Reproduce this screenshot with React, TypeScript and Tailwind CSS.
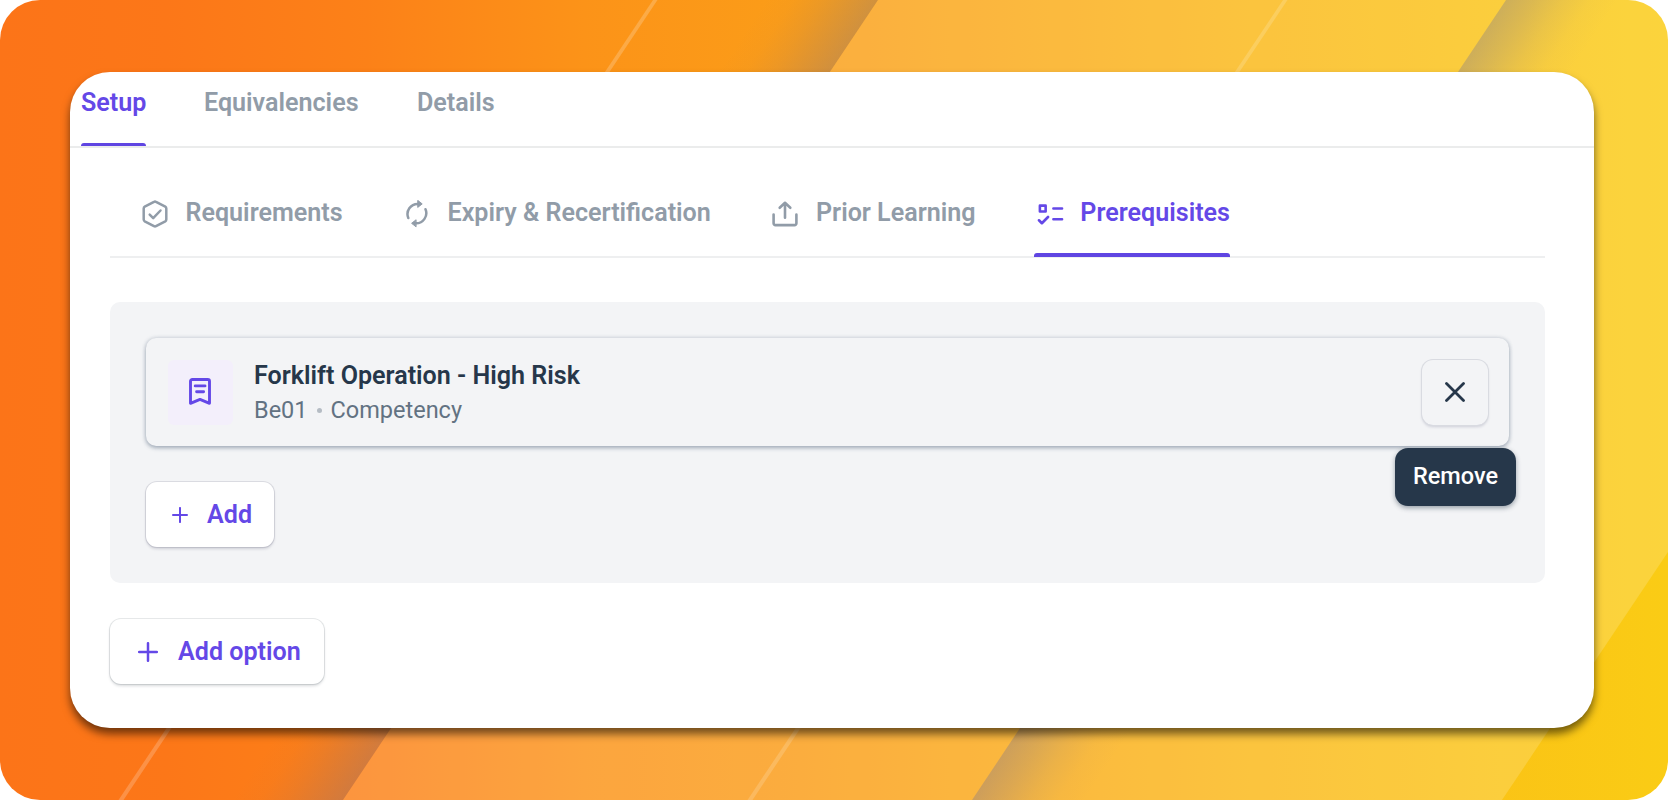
import React from "react";

function Backdrop() {
  return (
    <svg className="absolute inset-0 h-full w-full" viewBox="0 0 1668 800" preserveAspectRatio="none">
      <defs>
        <linearGradient id="base" x1="0" x2="1668" y1="0" y2="0" gradientUnits="userSpaceOnUse">
          <stop offset="0" stopColor="#fc7418" />
          <stop offset="0.1" stopColor="#fc7718" />
          <stop offset="0.22" stopColor="#fc8118" />
          <stop offset="0.35" stopColor="#fc9318" />
          <stop offset="0.48" stopColor="#fb9d18" />
          <stop offset="0.75" stopColor="#fbb817" />
          <stop offset="1" stopColor="#facc15" />
        </linearGradient>
        <linearGradient id="shadeLeft" x1="800" x2="878" y1="-52" y2="0" gradientUnits="userSpaceOnUse">
          <stop offset="0" stopColor="#6c6c98" stopOpacity="0" />
          <stop offset="0.25" stopColor="#6c6c98" stopOpacity="0.025" />
          <stop offset="0.5" stopColor="#6c6c98" stopOpacity="0.1" />
          <stop offset="0.75" stopColor="#6c6c98" stopOpacity="0.2" />
          <stop offset="1" stopColor="#6c6c98" stopOpacity="0.3" />
        </linearGradient>
        <linearGradient id="shadeRight" x1="1506" x2="1584" y1="0" y2="52" gradientUnits="userSpaceOnUse">
          <stop offset="0" stopColor="#6c6c98" stopOpacity="0.32" />
          <stop offset="0.25" stopColor="#6c6c98" stopOpacity="0.22" />
          <stop offset="0.5" stopColor="#6c6c98" stopOpacity="0.11" />
          <stop offset="0.75" stopColor="#6c6c98" stopOpacity="0.03" />
          <stop offset="1" stopColor="#6c6c98" stopOpacity="0" />
        </linearGradient>
      </defs>
      <rect width="1668" height="800" fill="url(#base)" />
      <path d="M700 0H878L343 800H165Z" fill="url(#shadeLeft)" />
      <path d="M878 0H1668V552L1502 800H343Z" fill="#fff" fillOpacity="0.17" />
      <path d="M1506 0H1668V60L1172 800H972Z" fill="url(#shadeRight)" />
      <path d="M653 0H657.5L123.500 800H118.500Z" fill="#fff" fillOpacity="0.2" />
      <path d="M1283 0H1287.500L752.500 800H747.500Z" fill="#fff" fillOpacity="0.17" />
    </svg>
  );
}

type IconProps = { className?: string };

const stroke = {
  fill: "none",
  stroke: "currentColor",
  strokeLinecap: "round" as const,
  strokeLinejoin: "round" as const,
};

function HexCheckIcon({ className }: IconProps) {
  return (
    <svg className={className} viewBox="0 0 28 28" {...stroke} strokeWidth="2.5">
      <path d="M13 1.800a2 2 0 0 1 2 0L24.300 6.700a2 2 0 0 1 1 1.700V19.600a2 2 0 0 1-1 1.700L15 26.200a2 2 0 0 1-2 0L3.700 21.300a2 2 0 0 1-1-1.700V8.400a2 2 0 0 1 1-1.700Z" />
      <path d="M8.700 14.600l3.500 3.500 7.300-7.600" />
    </svg>
  );
}

function CycleIcon({ className }: IconProps) {
  return (
    <svg className={className} viewBox="0 0 24 28" {...stroke} strokeWidth="2.5">
      <path d="M3.300 18A10.200 10.200 0 0 1 13 3.900" />
      <path d="M20.500 9.200A10.200 10.200 0 0 1 10.800 23.300" />
      <path d="M13 .6L17.200 3.900L13 7.200Z" fill="currentColor" strokeWidth="1" />
      <path d="M10.800 20L6.600 23.300L10.800 26.600Z" fill="currentColor" strokeWidth="1" />
    </svg>
  );
}

function UploadIcon({ className }: IconProps) {
  return (
    <svg className={className} viewBox="0 0 26 28" {...stroke} strokeWidth="2.6">
      <path d="M1.600 14.500V23.300a1.800 1.800 0 0 0 1.800 1.800H22.600a1.800 1.800 0 0 0 1.800-1.800V14.500" />
      <path d="M13 17.800V2.800M7.700 7.800l5.300-5 5.300 5" />
    </svg>
  );
}

function ChecklistIcon({ className }: IconProps) {
  return (
    <svg className={className} viewBox="0 0 27 22" {...stroke} strokeWidth="2.600">
      <path d="M2.900 2.600H8.700V8.500H2.900ZM16.500 5.500h8.700M16.500 16.300h8.700M2 17.300l2.900 3 6.200-6.300" />
    </svg>
  );
}

function BookmarkIcon({ className }: IconProps) {
  return (
    <svg className={className} viewBox="0 0 22 27" {...stroke} strokeWidth="2.900">
      <path d="M1.500 25.300V3.300a1.800 1.800 0 0 1 1.800-1.800H18.700a1.800 1.800 0 0 1 1.800 1.800V25.300L11 21.400Z" />
      <path d="M6.200 7.900h9.800M7.600 13.800h7" />
    </svg>
  );
}

function PlusIcon({ className }: IconProps) {
  return (
    <svg className={className} viewBox="0 0 20 20" {...stroke} strokeWidth="2.500">
      <path d="M10 1.200v17.600M1.200 10h17.600" />
    </svg>
  );
}

function CloseIcon({ className }: IconProps) {
  return (
    <svg className={className} viewBox="0 0 20 20" {...stroke} strokeWidth="2.800">
      <path d="M1.500 1.500l17 17M18.500 1.500l-17 17" />
    </svg>
  );
}

export default function App() {
  return (
    <div className="relative flex h-[800px] w-[1668px] overflow-hidden rounded-[40px] px-[70px] py-[72px] font-['Roboto',sans-serif] text-[25.100px] font-[570] text-[#919ca8]">
      <Backdrop />
      <main className="relative h-[656px] w-[1524px] rounded-[40px] bg-white shadow-[0_6px_9px_rgba(0,0,0,0.55)]">
        <nav className="flex h-[76px] items-start gap-[58px] border-b-2 border-[#ebecec] pl-[11px]">
          <div className="relative flex h-[74px] w-[65px] pt-[13px] leading-[36px] text-[#6448e7]">
            Setup
            <span className="absolute inset-x-0 bottom-0 h-[3.500px] rounded-t-[3px] bg-[#5f45e2]" />
          </div>
          <div className="w-[155px] pt-[13px] leading-[36px]">Equivalencies</div>
          <div className="pt-[13px] leading-[36px]">Details</div>
        </nav>

        <section className="pl-[40px] pr-[49px]">
          <nav className="flex h-[110px] border-b-2 border-[#eeeff0] pl-[31px] pt-[47px] leading-[36px]">
            <div className="flex w-[264px]">
              <HexCheckIcon className="mt-[5px] mr-[16.500px] h-[28px] w-[28px]" />
              Requirements
            </div>
            <div className="flex w-[367px]">
              <CycleIcon className="mt-[5px] mr-[18.500px] h-[28px] w-[24px]" />
              Expiry &amp; Recertification
            </div>
            <div className="flex w-[261.500px]">
              <UploadIcon className="mt-[5px] mr-[18px] h-[28px] w-[26px]" />
              Prior Learning
            </div>
            <div className="relative flex h-[61.500px] w-[196.500px] whitespace-nowrap pl-[3.500px] text-[#6448e7]">
              <ChecklistIcon className="mt-[8px] mr-[16.500px] h-[22px] w-[27px]" />
              Prerequisites
              <span className="absolute inset-x-0 bottom-0 h-[4px] rounded-t-[3px] bg-[#5f45e2]" />
            </div>
          </nav>

          <div className="mt-[44px] h-[281px] rounded-[10px] bg-[#f3f4f6] px-9 pt-9">
            <article className="flex h-[108px] w-[1363px] items-center rounded-[10px] pl-[22px] pr-[21.500px] shadow-[0_0_4px_rgba(80,100,125,0.22),0_2px_4px_rgba(80,100,125,0.45)]">
              <span className="flex h-[65px] w-[65px] items-center justify-center rounded-[6px] bg-[#f3effb] pr-[2px] pb-px text-[#6448e7]">
                <BookmarkIcon className="h-[27px] w-[22px]" />
              </span>
              <div className="ml-[21px] flex-1 pt-[2px]">
                <h2 className="text-[25.100px] leading-[35px] text-[#26374a]">Forklift Operation - High Risk</h2>
                <p className="flex items-center text-[23.500px] font-[420] leading-[35px] text-[#627282]">
                  Be01
                  <span className="mx-[9px] h-[5px] w-[5px] rounded-full bg-[#b5bcc4]" />
                  Competency
                </p>
              </div>
              <div className="relative">
                <button className="flex h-[65px] w-[66px] items-center justify-center rounded-[11px] text-[#26374a] shadow-[0_0_0_1px_#d9dbe1,0_2px_3px_rgba(60,60,100,0.2)]">
                  <CloseIcon className="h-5 w-5" />
                </button>
                <div className="absolute left-[-26.500px] top-[88px] z-10 flex h-[58px] w-[121px] items-center justify-center rounded-[13px] bg-[#26374a] pt-px text-[23.500px] font-medium text-white shadow-[0_2px_5px_rgba(38,55,74,0.45)]">
                  Remove
                </div>
              </div>
            </article>
            <button className="mt-9 flex h-[65px] w-[128px] items-center rounded-[11px] bg-white pl-[26px] text-[#6448e7] shadow-[0_0_0_1px_rgba(60,60,90,0.13),0_2px_3px_rgba(60,60,90,0.2)]">
              <PlusIcon className="mr-[19px] h-[16px] w-[16px]" />
              <span className="pt-px">Add</span>
            </button>
          </div>

          <button className="mt-9 flex h-[65px] w-[214px] items-center rounded-[11px] bg-white pl-[28px] text-[#6448e7] shadow-[0_0_0_1px_rgba(60,70,80,0.12),0_2px_3px_rgba(60,70,80,0.2)]">
            <PlusIcon className="mr-[20px] h-5 w-5" />
            <span className="pt-px">Add option</span>
          </button>
        </section>
      </main>
    </div>
  );
}
